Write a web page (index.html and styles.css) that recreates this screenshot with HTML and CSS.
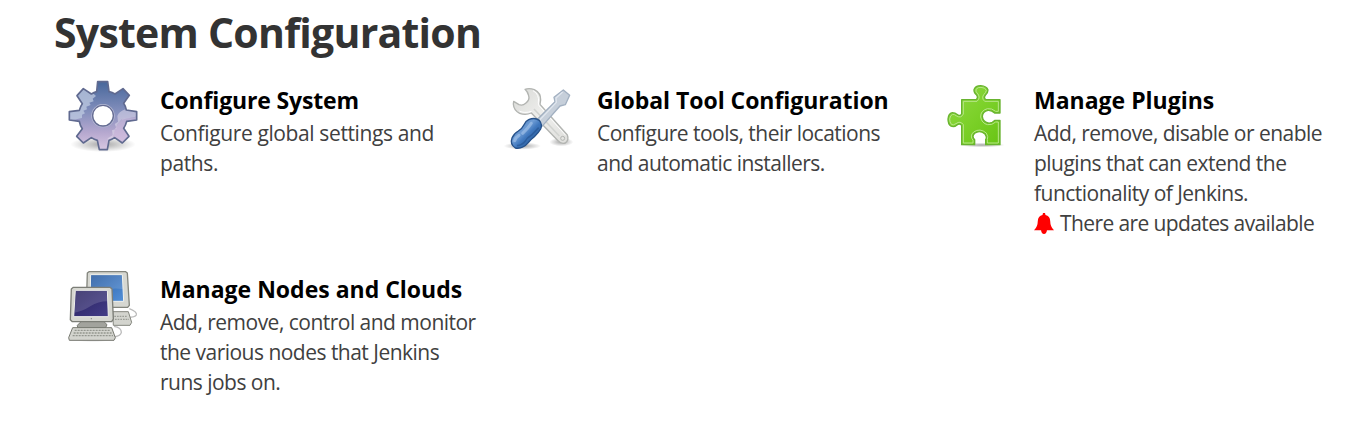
FILE: index.html
```html
<!DOCTYPE html>
<html lang="en">
<head>
<meta charset="utf-8">
<title>System Configuration</title>
<link rel="stylesheet" href="styles.css">
</head>
<body>
<main class="page">
<h1 class="heading">System Configuration</h1>
<div class="grid">
  <a class="item">
    <svg class="icon" viewBox="0 0 258 252">
      <defs>
        <linearGradient id="gear" x1="0" y1="0" x2="0" y2="1"><stop offset="0" stop-color="#47679b"/><stop offset=".45" stop-color="#8590bd"/><stop offset=".75" stop-color="#b6a8cf"/><stop offset="1" stop-color="#d8c8e2"/></linearGradient>
        <radialGradient id="shade"><stop offset="0" stop-color="#000" stop-opacity=".35"/><stop offset="1" stop-color="#000" stop-opacity="0"/></radialGradient>
        <clipPath id="gearClip"><path id="gearShape" d="M113 23H143L147 53Q157 55 165 60L189 44L208 64L191 88Q197 97 199 108L230 113V138L200 142Q197 154 191 163L207 187L187 207L164 191Q155 197 147 199L142 227H118L112 199Q103 197 94 191L70 207L50 187L67 164Q60 154 58 142L28 138V113L58 109Q61 97 67 89L51 65L70 44L94 60Q102 55 110 53Z"/></clipPath>
      </defs>
      <ellipse cx="129" cy="211" rx="98" ry="23" fill="url(#shade)"/>
      <path fill="url(#gear)" d="M113 23H143L147 53Q157 55 165 60L189 44L208 64L191 88Q197 97 199 108L230 113V138L200 142Q197 154 191 163L207 187L187 207L164 191Q155 197 147 199L142 227H118L112 199Q103 197 94 191L70 207L50 187L67 164Q60 154 58 142L28 138V113L58 109Q61 97 67 89L51 65L70 44L94 60Q102 55 110 53Z"/>
      <g clip-path="url(#gearClip)">
        <path fill="#bfcbe1" opacity=".75" d="M28 40H80L108 66L98 74L101 82L88 86L92 93L79 98L81 106L70 110L75 118L66 122V132L28 140Z"/>
        <path fill="#e6dff0" opacity=".5" d="M235 105L196 106Q177 112 172 126L174 143L164 150L170 164L156 169L158 184L143 193V215L158 207Q160 159 184 137L235 127Z"/>
        <path fill="#d9c3e3" opacity=".5" d="M160 205Q157 160 187 135L235 128V225Z"/>
      </g>
      <circle cx="129" cy="125" r="35" fill="#b9bdd6"/>
      <circle cx="129" cy="125" r="31" fill="#fff" stroke="#646b92" stroke-width="4"/>
      <use href="#gearShape" fill="none" stroke="#606a90" stroke-width="5" stroke-linejoin="round"/>
    </svg>
    <div class="text"><h2 class="title title-system">Configure System</h2><p class="desc desc-system">Configure global settings and<br>paths.</p></div>
  </a>
  <a class="item">
    <svg class="icon" viewBox="0 0 258 252">
      <defs>
        <linearGradient id="steel" x1="0" y1="0" x2="1" y2="1"><stop offset="0" stop-color="#d7d8d5"/><stop offset=".5" stop-color="#efefed"/><stop offset="1" stop-color="#dededb"/></linearGradient>
        <linearGradient id="handle" x1="0" y1="0" x2="1" y2="1"><stop offset="0" stop-color="#3269b0"/><stop offset=".4" stop-color="#6f9dd5"/><stop offset=".55" stop-color="#4078be"/><stop offset="1" stop-color="#194780"/></linearGradient>
      </defs>
      <g transform="translate(9 12)" stroke-linejoin="round">
        <ellipse cx="67" cy="204" rx="56" ry="11" fill="url(#shade)"/>
        <ellipse cx="184" cy="192" rx="36" ry="13" fill="url(#shade)"/>
        <path fill="url(#steel)" stroke="#b2b4b1" stroke-width="4" d="M75 34Q88 29 103 35Q123 45 122 66L120 79L202 171Q208 186 196 195Q183 199 174 188L94 105Q76 113 59 106Q41 97 40 78L41 70L57 80Q68 84 77 76Q90 66 86 53Q84 42 75 34Z"/>
        <path fill="none" stroke="#fff" stroke-width="3" d="M99 38Q119 48 115 75L117 83L197 172M95 100Q73 107 58 99"/>
        <path fill="none" stroke="#d2d4d1" stroke-width="5" d="M102 93L178 174"/>
        <circle cx="188" cy="181" r="6" fill="#e5e5e2" stroke="#b2b4b1" stroke-width="3"/>
        <path fill="#c6cfda" stroke="#a2b0c1" stroke-width="4" d="M190 36L209 52L196 80L180 84L126 145L108 128L165 71L162 58Z"/>
        <path fill="none" stroke="#e0e6ee" stroke-width="4" d="M188 42L168 60L169 73L119 126"/>
        <path fill="url(#handle)" stroke="#265189" stroke-width="4" d="M86 125Q104 117 118 127Q128 140 122 153Q116 164 103 176Q92 184 85 194Q68 214 46 210Q29 199 36 180Q41 167 55 159Q67 151 72 140Q77 129 86 125Z"/>
        <path fill="none" stroke="#a8c7eb" stroke-width="9" stroke-linecap="round" opacity=".6" d="M94 136Q85 151 68 166M57 172Q48 177 44 188"/>
        <path fill="none" stroke="#1d4780" stroke-width="5" opacity=".45" d="M116 149L94 172Q80 180 76 189Q66 202 51 203"/>
      </g>
    </svg>
    <div class="text"><h2 class="title title-tools">Global Tool Configuration</h2><p class="desc">Configure tools, their locations<br>and automatic installers.</p></div>
  </a>
  <a class="item">
    <svg class="icon" viewBox="0 0 258 252">
      <defs><linearGradient id="green" x1="0" y1="0" x2="1" y2="1"><stop offset="0" stop-color="#92d848"/><stop offset=".5" stop-color="#7dd12a"/><stop offset="1" stop-color="#68c414"/></linearGradient></defs>
      <g transform="translate(18 12)" stroke-linejoin="round">
        <ellipse cx="126" cy="201" rx="69" ry="7" fill="url(#shade)"/>
        <path fill="url(#green)" stroke="#68b32f" stroke-width="4" d="M65 65H108Q116 59 109 50Q101 44 102 35Q106 23 122 23Q140 24 144 36Q144 45 136 52Q130 60 138 65H180V105H164Q155 96 144 97Q127 101 127 116Q129 132 144 135Q155 137 164 127H180V200H137V184Q142 178 135 168Q119 155 104 166Q94 176 104 185V200H65V142Q58 134 50 142Q42 149 32 144Q24 138 24 123Q25 107 37 104Q45 104 53 110Q61 116 65 107Z"/>
        <path fill="none" stroke="#b8e68a" stroke-width="3" d="M70 70H111Q122 60 114 48Q106 42 108 34Q114 27 123 28Q137 29 139 37Q138 43 132 49Q123 60 134 70H175V100H167Q155 90 142 92Q121 98 122 117Q125 136 143 140Q156 142 167 132H175V195H142V185Q146 177 139 165Q120 149 101 162Q88 173 99 187V195H70V140Q61 127 48 137Q39 143 34 139Q29 132 29 123Q31 111 38 109Q44 109 50 114Q63 122 70 108Z"/>
      </g>
    </svg>
    <div class="text"><h2 class="title">Manage Plugins</h2><p class="desc">Add, remove, disable or enable<br>plugins that can extend the<br>functionality of Jenkins.<br><svg class="bell" viewBox="0 0 20 21"><path fill="red" d="M9 0H11L11.5 2Q16 3 16.2 8Q16.3 14 20 17.2H0Q3.7 14 3.8 8Q4 3 8.5 2ZM7 17H13Q12.5 21 10 21T7 17Z"/></svg><span class="notice">There are updates available</span></p></div>
  </a>
  <a class="item">
    <svg class="icon" viewBox="0 0 258 252">
      <defs>
        <linearGradient id="blue" x1="0" y1="0" x2="1" y2="1"><stop offset="0" stop-color="#24589f"/><stop offset="1" stop-color="#5390d8"/></linearGradient>
        <linearGradient id="navy" x1="0" y1="0" x2="1" y2="1"><stop offset="0" stop-color="#27215f"/><stop offset="1" stop-color="#443d88"/></linearGradient>
      </defs>
      <g transform="translate(0 3)" stroke-linejoin="round">
        <path fill="none" stroke="#bbb" stroke-width="4" d="M208 134Q232 143 229 153Q225 160 205 160M162 187Q184 190 184 205Q182 216 164 218"/>
        <path fill="#d3d4ce" stroke="#85877f" stroke-width="3" d="M158 143H205L215 175L210 184H160Z"/>
        <path fill="none" stroke="#9b9d96" stroke-width="4" stroke-dasharray="5 3" d="M163 157H202M165 166H207"/>
        <path fill="#d6d7d1" stroke="#83857d" stroke-width="4" d="M87 23H197L202 27L208 124L203 130H83L79 124L82 27Z"/>
        <path fill="url(#blue)" stroke="#f1f2ed" stroke-width="3" d="M92 32H187L191 112H90Z"/>
        <path fill="#fff" opacity=".13" d="M94 34H186L189 76Q149 66 107 93L92 96Z"/>
        <ellipse cx="99" cy="222" rx="78" ry="12" fill="url(#shade)"/>
        <path fill="#a2a39d" stroke="#777971" stroke-width="3" d="M65 171H130L141 182L137 191H53L52 184Z"/>
        <path fill="#d6d7d1" stroke="#7c7e77" stroke-width="4" d="M40 70H150L156 75L160 165L155 173H37L31 167L34 75Z"/>
        <path fill="url(#navy)" stroke="#f0f1ec" stroke-width="3" d="M46 79H142L145 158H41Z"/>
        <path fill="#fff" opacity=".15" d="M48 81H140L142 112Q115 112 91 127Q66 143 43 146Z"/>
        <circle cx="94" cy="164" r="2" fill="#888"/>
        <path fill="#d3d4ce" stroke="#777971" stroke-width="3" d="M38 191H155L166 221L162 229H28L26 221Z"/>
        <path fill="none" stroke="#94968f" stroke-width="4" stroke-dasharray="6 3" d="M44 199H151M41 207H156M38 215H159"/>
      </g>
    </svg>
    <div class="text"><h2 class="title">Manage Nodes and Clouds</h2><p class="desc">Add, remove, control and monitor<br>the various nodes that Jenkins<br>runs jobs on.</p></div>
  </a>
</div>
</main>
</body>
</html>
```
FILE: styles.css
```css
body { margin: 0; background: #fff; font-family: "Open Sans", "Noto Sans", sans-serif; color: #333; }
.page { padding-left: 54px; height: 422px; overflow: hidden; }
.heading { margin: 0; padding-top: 2px; height: 72px; font-size: 41px; line-height: 60px; font-weight: 700; letter-spacing: -0.75px; white-space: nowrap; }
.grid { display: grid; grid-template-columns: repeat(3, 437px); grid-auto-rows: 189px; }
.item { display: flex; gap: 14px; padding-left: 6px; }
.icon { width: 86px; height: 84px; flex: none; }
.text { padding-top: 10px; white-space: nowrap; }
.title { margin: 0; padding-bottom: 2px; font-size: 23px; line-height: 32px; font-weight: 700; color: #000; }
.title-system { letter-spacing: -0.15px; }
.title-tools { letter-spacing: -0.05px; }
.desc { margin: 0; font-size: 21px; line-height: 30px; letter-spacing: -0.52px; color: #404040; }
.desc-system { letter-spacing: -0.38px; }
.notice { letter-spacing: -0.61px; }
.bell { width: 20px; height: 21px; margin-right: 6px; vertical-align: -3px; }
```
